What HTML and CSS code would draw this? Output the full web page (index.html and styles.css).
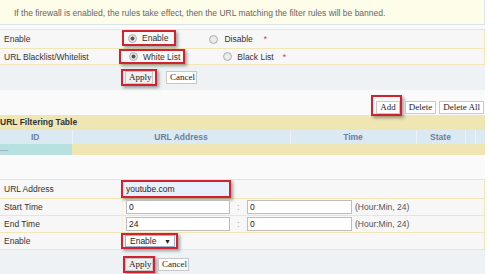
FILE: index.html
```html
<!DOCTYPE html>
<html lang="en">
<head>
    <meta charset="UTF-8">
    <title>URL Filtering</title>
    <link rel="stylesheet" href="styles.css">
</head>
<body>
    <div class="page">
        <div class="notice">If the firewall is enabled, the rules take effect, then the URL matching the filter rules will be banned.</div>

        <table class="form-table top-form">
            <tr class="row-a">
                <td class="label">Enable</td>
                <td class="value">
                    <div class="choice">
                        <span class="mark opt-enable"><span class="radio on"></span>Enable</span>
                        <span class="opt opt-disable"><span class="radio"></span>Disable</span>
                        <span class="req req-a">*</span>
                    </div>
                </td>
            </tr>
            <tr class="row-b">
                <td class="label">URL Blacklist/Whitelist</td>
                <td class="value">
                    <div class="choice">
                        <span class="mark opt-white"><span class="radio on"></span>White List</span>
                        <span class="opt opt-black"><span class="radio"></span>Black List</span>
                        <span class="req req-b">*</span>
                    </div>
                </td>
            </tr>
        </table>

        <div class="actions">
            <span class="mark mark-btn"><button class="btn btn-apply">Apply</button></span>
            <button class="btn btn-cancel">Cancel</button>
        </div>

        <div class="toolbar">
            <span class="mark mark-add"><button class="btn">Add</button></span>
            <button class="btn">Delete</button>
            <button class="btn">Delete All</button>
        </div>

        <div class="table-title">URL Filtering Table</div>
        <table class="list-table">
            <tr class="head">
                <th class="col-id">ID</th>
                <th class="col-url">URL Address</th>
                <th class="col-time">Time</th>
                <th class="col-state">State</th>
                <th class="col-x"></th>
                <th class="col-x"></th>
            </tr>
            <tr class="empty">
                <td class="cell-id">-----</td>
                <td></td>
                <td></td>
                <td></td>
                <td></td>
                <td></td>
            </tr>
        </table>

        <div class="spacer"></div>

        <table class="form-table edit-form">
            <tr>
                <td class="label">URL Address</td>
                <td class="value">
                    <span class="mark mark-url"><input class="text text-url" type="text" value="youtube.com"></span>
                </td>
            </tr>
            <tr>
                <td class="label">Start Time</td>
                <td class="value">
                    <div class="time">
                        <input class="text" type="text" value="0">
                        <span class="colon">:</span>
                        <input class="text text-min" type="text" value="0">
                        <span class="hint">(Hour:Min, 24)</span>
                    </div>
                </td>
            </tr>
            <tr>
                <td class="label">End Time</td>
                <td class="value">
                    <div class="time">
                        <input class="text" type="text" value="24">
                        <span class="colon">:</span>
                        <input class="text text-min" type="text" value="0">
                        <span class="hint">(Hour:Min, 24)</span>
                    </div>
                </td>
            </tr>
            <tr>
                <td class="label">Enable</td>
                <td class="value">
                    <span class="mark mark-select"><span class="select">Enable<span class="arrow">&#9660;</span></span></span>
                </td>
            </tr>
        </table>

        <div class="actions bottom-actions">
            <span class="mark mark-btn2"><button class="btn btn-apply">Apply</button></span>
            <button class="btn btn-cancel2">Cancel</button>
        </div>
    </div>
</body>
</html>
```
FILE: styles.css
```css
:root {
    --row-bg: #f7f7f7;
    --row-border: #f3e6b6;
    --khaki: #f0e6b4;
    --head-blue: #dbeaf2;
    --teal: #b7e1e1;
    --gray-bar: #eef2f5;
    --red: #cf2430;
    --text: #333;
}

* {
    box-sizing: border-box;
}

body {
    margin: 0;
    background: #fff;
    font-family: "Liberation Sans", Arial, sans-serif;
    font-size: 8.5px;
    color: var(--text);
}

.page {
    width: 486px;
    margin-left: -1px;
    background: #fafafa;
}

.notice {
    height: 25px;
    line-height: 26px;
    padding-left: 14px;
    background: #fdfde9;
    border: 1px solid #d9e3ea;
    border-top: 0;
    color: #666;
    margin-bottom: 4px;
}

/* form tables */
.form-table {
    width: 100%;
    border-collapse: collapse;
    background: var(--row-bg);
}

.form-table td {
    border: 1px solid var(--row-border);
    padding: 0;
}

.form-table .label {
    width: 121px;
    padding-left: 4px;
    border-right-color: var(--row-bg);
}

.top-form .row-a td {
    height: 17px;
}

.top-form .row-b td {
    height: 16px;
}

.choice {
    display: flex;
    align-items: center;
}

.mark {
    display: inline-flex;
    align-items: center;
    border: 2px solid var(--red);
    box-shadow: 2px 2px 3px rgba(0, 0, 0, 0.35);
}

.radio {
    display: inline-block;
    width: 9px;
    height: 9px;
    border-radius: 50%;
    border: 1px solid #b0b0b0;
    background: radial-gradient(circle, #f4f4f4, #dcdcdc);
}

.radio.on {
    background: radial-gradient(circle, #555 0 1.7px, #e2e2e2 2.3px, #ececec);
}

.opt {
    display: inline-flex;
    align-items: center;
}

.opt-enable {
    height: 16px;
    margin: 0 0 2px 1px;
    padding: 0 6px 0 4px;
    gap: 5px;
}

.opt-disable {
    margin-left: 33px;
    gap: 6px;
}

.opt-white {
    height: 15px;
    margin-left: -2px;
    padding: 0 3px 0 8px;
    gap: 5px;
}

.opt-black {
    margin-left: 38px;
    gap: 5px;
}

.req {
    color: #e0303a;
}

.req-a {
    margin-left: 11px;
}

.req-b {
    margin-left: 9px;
}

/* buttons */
.btn {
    height: 13px;
    padding: 0 3px;
    margin: 0;
    border: 1px solid #c8c8c8;
    background: #fff;
    font-family: "Liberation Serif", "Times New Roman", serif;
    font-size: 9px;
    line-height: 11px;
    color: #222;
}

.btn-apply {
    background: #f0f0f0;
    width: 28px;
}

.actions {
    height: 25px;
    display: flex;
    align-items: center;
    padding-left: 122px;
    background: var(--gray-bar);
}

.mark-btn {
    padding: 0 2px;
}

.btn-cancel {
    margin-left: 9px;
    width: 31px;
}

.toolbar {
    height: 25px;
    display: flex;
    justify-content: flex-end;
    align-items: flex-end;
    gap: 3px;
    padding: 0 1px 1px 0;
}

.mark-add {
    padding: 4px 0 0 3px;
    margin-bottom: -2px;
}

/* list table */
.table-title {
    height: 15px;
    line-height: 15px;
    padding-left: 1px;
    background: var(--khaki);
    font-weight: bold;
    color: #333;
}

.list-table {
    width: 100%;
    border-collapse: collapse;
    table-layout: fixed;
}

.list-table th {
    height: 14px;
    padding: 0;
    background: var(--head-blue);
    border-left: 1px solid #eaf3f8;
    color: #6a7f9e;
    font-weight: bold;
    text-align: center;
}

.list-table th:first-child {
    border-left: 0;
}

.col-id { width: 73px; }
.col-url { width: 218px; }
.col-time { width: 126px; }
.col-state { width: 49px; }
.col-x { width: 10px; }

.list-table td {
    height: 11px;
    padding: 0;
    background: var(--khaki);
}

.list-table .cell-id {
    background: var(--teal);
    font-size: 5px;
    color: #667;
    padding-left: 1px;
}

.spacer {
    height: 24px;
}

/* edit form */
.edit-form .label {
    width: 123px;
    border-right-color: #f4efd9;
}

.edit-form td {
    height: 17px;
}

.edit-form .value {
    padding-left: 3px;
}

.text {
    width: 104px;
    height: 14px;
    margin: 0;
    padding: 0 2px;
    border: 1px solid #bdbdbd;
    background: #fff;
    font-family: "Liberation Sans", Arial, sans-serif;
    font-size: 8.5px;
    color: #222;
}

.mark-url {
    margin-left: -5px;
}

.text-url {
    width: 106px;
    padding-left: 3px;
    border: 0;
    background: #e8f0fe;
}

.time {
    display: flex;
    align-items: center;
}

.colon {
    width: 17px;
    text-align: center;
    color: #999;
}

.text-min {
    width: 105px;
}

.hint {
    margin-left: 3px;
    color: #555;
}

.mark-select {
    margin-left: -5px;
    padding: 0 1px 0 2px;
}

.select {
    display: inline-flex;
    align-items: center;
    justify-content: space-between;
    width: 50px;
    height: 12px;
    padding: 0 3px 0 4px;
    border: 1px solid #9fb4d0;
    background: #fff;
    color: #222;
}

.arrow {
    font-size: 7px;
}

.bottom-actions {
    height: 28px;
    padding-left: 124px;
}

.mark-btn2 {
    padding: 0;
}

.btn-cancel2 {
    margin-left: 3px;
    width: 31px;
}
```
